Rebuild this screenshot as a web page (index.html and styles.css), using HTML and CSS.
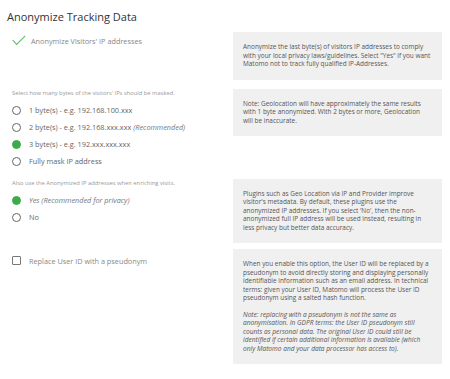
FILE: index.html
```html
<!DOCTYPE html>
<html>
<head>
<meta charset="utf-8">
<link rel="stylesheet" href="styles.css">
</head>
<body>
<div class="page">
  <h2 class="title">Anonymize Tracking Data</h2>

  <div class="row">
    <div class="field">
      <label class="option">
        <svg class="tick" width="14" height="11" viewBox="0 0 14 11"><path d="M0.8 5.2 L4.6 9.4 L13.2 0.8" fill="none" stroke="#66bb6a" stroke-width="1.1"/></svg>
        <span class="option-text light">Anonymize Visitors' IP addresses</span>
      </label>
    </div>
    <div class="help">Anonymize the last byte(s) of visitors IP addresses to comply with your local privacy laws/guidelines. Select "Yes" if you want Matomo not to track fully qualified IP-Addresses.</div>
  </div>

  <div class="row">
    <div class="field">
      <p class="field-title">Select how many bytes of the visitors' IPs should be masked.</p>
      <label class="option"><span class="radio"></span><span class="option-text">1 byte(s) - e.g. 192.168.100.xxx</span></label>
      <label class="option"><span class="radio"></span><span class="option-text">2 byte(s) - e.g. 192.168.xxx.xxx <em>(Recommended)</em></span></label>
      <label class="option"><span class="radio on"></span><span class="option-text">3 byte(s) - e.g. 192.xxx.xxx.xxx</span></label>
      <label class="option"><span class="radio"></span><span class="option-text">Fully mask IP address</span></label>
    </div>
    <div class="help">Note: Geolocation will have approximately the same results with 1 byte anonymized. With 2 bytes or more, Geolocation<br>will be inaccurate.</div>
  </div>

  <div class="row">
    <div class="field">
      <p class="field-title">Also use the Anonymized IP addresses when enriching visits.</p>
      <label class="option"><span class="radio on"></span><span class="option-text"><em>Yes (Recommended for privacy)</em></span></label>
      <label class="option"><span class="radio"></span><span class="option-text">No</span></label>
    </div>
    <div class="help">Plugins such as Geo Location via IP and Provider improve visitor's metadata. By default, these plugins use the anonymized IP addresses. If you select 'No', then the non-anonymized full IP address will be used instead, resulting in less privacy but better data accuracy.</div>
  </div>

  <div class="row row-last">
    <div class="field">
      <label class="option box-option"><span class="checkbox"></span><span class="option-text light">Replace User ID with a pseudonym</span></label>
    </div>
    <div class="help">
      <p class="help-p">When you enable this option, the User ID will be replaced by a pseudonym to avoid directly storing and displaying personally identifiable information such as an email address. In technical terms: given your User ID, Matomo will process the User ID pseudonym using a salted hash function.</p>
      <p class="help-p note">Note: replacing with a pseudonym is not the same as anonymisation. In GDPR terms: the User ID pseudonym still counts as personal data. The original User ID could still be identified if certain additional information is available (which only Matomo and your data processor has access to).</p>
    </div>
  </div>
</div>
</body>
</html>
```

FILE: styles.css
```css
* { box-sizing: border-box; }
body {
  margin: 0;
  background: #fff;
  font-family: "Open Sans", "Noto Sans", sans-serif;
  color: #555;
}
.page {
  width: 450px;
  padding: 9px 8px 0 7px;
}
.title {
  margin: 0 0 7px 0;
  font-size: 11px;
  line-height: 16px;
  font-weight: 400;
  color: #333;
}
.row {
  display: grid;
  grid-template-columns: 226px 209px;
  align-items: start;
  margin-bottom: 9px;
}
.row-last {
  margin-top: -3px;
}
.field {
  padding-left: 5px;
}
.option {
  display: flex;
  align-items: center;
  height: 17px;
}
.box-option {
  margin-top: 3px;
}
.tick {
  margin-right: 5px;
}
.option-text {
  font-size: 7.3px;
  color: #666;
  white-space: nowrap;
}
.option-text.light {
  color: #888;
}
.option-text em {
  font-style: italic;
  color: #777;
}
.radio {
  width: 9px;
  height: 9px;
  border: 1.2px solid #666;
  border-radius: 50%;
  margin-right: 8px;
  flex: none;
}
.radio.on {
  border-color: #3dab4c;
  background: #3dab4c;
}
.checkbox {
  width: 9px;
  height: 9px;
  border: 1.2px solid #777;
  border-radius: 1px;
  margin-right: 8px;
  flex: none;
}
.field-title {
  margin: 0 0 5px 0;
  font-size: 5.8px;
  line-height: 8px;
  color: #999;
  white-space: nowrap;
}
.help {
  background: #f0f0f0;
  padding: 11px 8px 11px 10px;
  font-size: 6.45px;
  line-height: 8.5px;
  color: #555;
}
.help-p {
  margin: 0 0 8px 0;
}
.help-p:last-child {
  margin-bottom: 0;
}
.note {
  font-style: italic;
  font-size: 6.6px;
}
```
